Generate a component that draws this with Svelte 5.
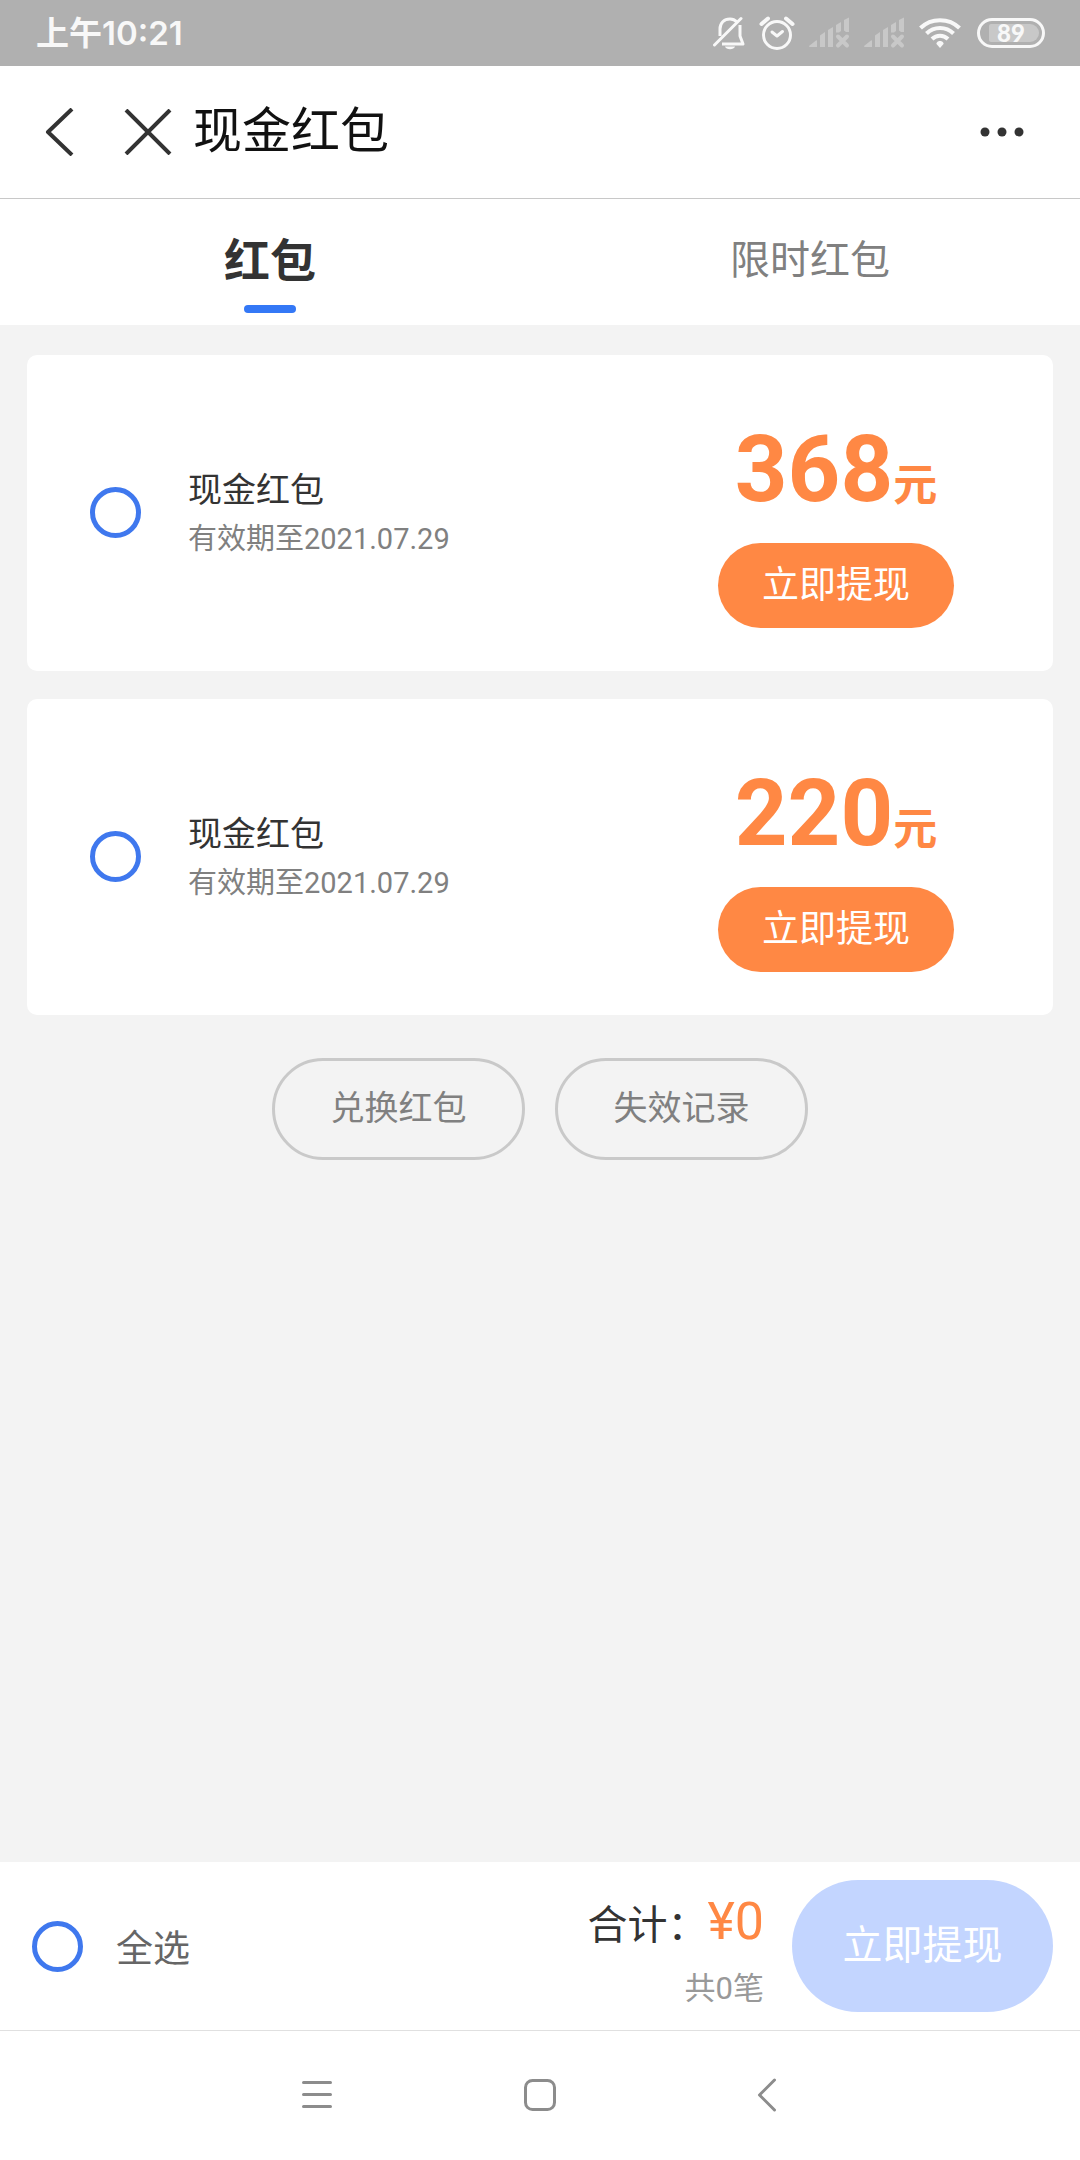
<script>
  let activeTab = 'normal';
  let checked = [];

  const tabs = [
    { id: 'normal', label: '红包' },
    { id: 'limited', label: '限时红包' }
  ];

  const packets = [
    { id: 1, name: '现金红包', expires: '2021.07.29', amount: 368 },
    { id: 2, name: '现金红包', expires: '2021.07.29', amount: 220 }
  ];

  $: selected = packets.filter((p) => checked.includes(p.id));
  $: total = selected.reduce((sum, p) => sum + p.amount, 0);
  $: allChecked = selected.length === packets.length;

  function toggleAll() {
    checked = allChecked ? [] : packets.map((p) => p.id);
  }
</script>

<div class="screen">
  <div class="status-bar">
    <span class="clock">上午10:21</span>
    <div class="status-icons">
      <!-- muted bell -->
      <svg width="32" height="34" viewBox="0 0 32 34" fill="none" stroke="#f8f8f8" stroke-width="3">
        <path d="M7 20V13C7 7 11 3 17 3C20 3 22 4 24 6M27 9V20L30 28H9" stroke-linejoin="round" />
        <path d="M1.500 29L28 2.500" stroke-linecap="round" />
        <path d="M12 30.500H22C21 34 13 34 12 30.500Z" fill="#f8f8f8" stroke="none" />
      </svg>
      <!-- alarm -->
      <svg width="36" height="34" viewBox="0 0 36 34" fill="none" stroke="#f8f8f8" stroke-linecap="round">
        <circle cx="18" cy="19" r="13.5" stroke-width="3" />
        <path d="M2.500 8L9 2.500M33.500 8L27 2.500" stroke-width="4" />
        <path d="M13 16L18 20L23.500 15.500" stroke-width="3" stroke-linejoin="round" />
      </svg>
      {#each [1, 2] as sim (sim)}
        <svg width="41" height="34" viewBox="0 0 41 34" fill="#c8c8c8">
          <path d="M0 30L7 24.500Q8 24 8 25V31H1Q0 31 0 30Z" />
          <path d="M11 19.500L16 16V31H11Z" />
          <path d="M19 14L24 11V31H19Z" />
          <path d="M27 9L32 6V15L30 16.500H27Z" />
          <path d="M35 4L40 1.500V16H37L35 14.500Z" />
          <path d="M29 20.500L38 29.500M38 20.500L29 29.500" stroke="#c8c8c8" stroke-width="4" stroke-linecap="round" />
        </svg>
      {/each}
      <!-- wifi -->
      <svg class="wifi" width="42" height="34" viewBox="0 0 42 34" fill="none" stroke="#f8f8f8" stroke-width="4">
        <path d="M1.500 12C12 1.500 30 1.500 40.500 12" />
        <path d="M7.500 17.500C15 10 27 10 34.500 17.500" />
        <path d="M13 23C17.500 18.500 24.500 18.500 29 23" />
        <path d="M21 25C23 25 25 26.500 24.500 28L21 32L17.500 28C17 26.500 19 25 21 25Z" fill="#f8f8f8" stroke="none" />
      </svg>
      <span class="battery"><span class="level">89</span></span>
    </div>
  </div>

  <header class="title-bar">
    <button class="icon-btn back" aria-label="返回">
      <svg width="30" height="48" viewBox="0 0 30 48" fill="none" stroke="#333" stroke-width="4">
        <path d="M28 1L4 24L28 47" stroke-linejoin="round" />
      </svg>
    </button>
    <button class="icon-btn close" aria-label="关闭">
      <svg width="48" height="46" viewBox="0 0 48 46" fill="none" stroke="#333" stroke-width="4">
        <path d="M2 1L46 45M46 1L2 45" />
      </svg>
    </button>
    <h1>现金红包</h1>
    <button class="icon-btn more" aria-label="更多">
      <svg width="46" height="12" viewBox="0 0 46 12" fill="#333">
        <circle cx="6" cy="6" r="4.500" />
        <circle cx="23" cy="6" r="4.500" />
        <circle cx="40" cy="6" r="4.500" />
      </svg>
    </button>
  </header>

  <div class="tabs" role="tablist">
    {#each tabs as tab (tab.id)}
      <button
        class="tab"
        class:active={activeTab === tab.id}
        role="tab"
        aria-selected={activeTab === tab.id}
        on:click={() => (activeTab = tab.id)}
      >{tab.label}</button>
    {/each}
  </div>

  <main>
    {#each packets as packet (packet.id)}
      <section class="card">
        <input
          id="packet-{packet.id}"
          class="check"
          type="checkbox"
          value={packet.id}
          bind:group={checked}
        />
        <label class="info" for="packet-{packet.id}">
          <span class="name">{packet.name}</span>
          <span class="expires">有效期至{packet.expires}</span>
        </label>
        <div class="payout">
          <div class="amount">{packet.amount}<span class="unit">元</span></div>
          <button class="withdraw">立即提现</button>
        </div>
      </section>
    {/each}

    <div class="links">
      <button class="outline">兑换红包</button>
      <button class="outline">失效记录</button>
    </div>
  </main>

  <footer class="summary">
    <input id="check-all" class="check" type="checkbox" checked={allChecked} on:change={toggleAll} />
    <label class="all" for="check-all">全选</label>
    <div class="totals">
      <div class="sum">合计：<span class="money">¥{total}</span></div>
      <div class="count">共{selected.length}笔</div>
    </div>
    <button class="withdraw-all" disabled={selected.length === 0}>立即提现</button>
  </footer>

  <nav class="system-nav">
    <button class="icon-btn" aria-label="菜单">
      <svg width="34" height="34" viewBox="0 0 34 34" fill="none" stroke="#8c8c8c" stroke-width="3" stroke-linecap="round">
        <path d="M4.500 4.500H31.500M4.500 16.500H31.500M4.500 28.500H31.500" />
      </svg>
    </button>
    <button class="icon-btn" aria-label="主屏幕">
      <svg width="34" height="34" viewBox="0 0 34 34" fill="none" stroke="#8c8c8c" stroke-width="3">
        <rect x="2.500" y="2.500" width="29" height="29" rx="7" />
      </svg>
    </button>
    <button class="icon-btn" aria-label="返回上一页">
      <svg width="34" height="34" viewBox="0 0 34 34" fill="none" stroke="#8c8c8c" stroke-width="3" stroke-linecap="round" stroke-linejoin="round">
        <path d="M27.500 2L12.500 17L27.500 32" />
      </svg>
    </button>
  </nav>
</div>

<style>
  :global(body) {
    margin: 0;
    background: #f3f3f3;
  }

  .screen {
    display: flex;
    flex-direction: column;
    min-height: 100vh;
    font-family: Roboto, "Noto Sans CJK SC", sans-serif;
    color: #333;
  }

  button {
    display: block;
    margin: 0;
    padding: 0;
    border: 0;
    background: none;
    font: inherit;
    color: inherit;
    cursor: pointer;
  }

  svg {
    display: block;
  }

  .status-bar {
    display: flex;
    align-items: center;
    justify-content: space-between;
    height: 66px;
    padding: 0 35px 0 36px;
    background: #b0b0b0;
    color: #f8f8f8;
  }

  .clock {
    font-family: Inter, "Noto Sans CJK SC", sans-serif;
    font-size: 33px;
    font-weight: 600;
    line-height: 40px;
  }

  .status-icons {
    display: flex;
    align-items: center;
    gap: 14px;
  }

  .wifi {
    margin-right: 2px;
  }

  .battery {
    display: flex;
    box-sizing: border-box;
    width: 68px;
    height: 30px;
    padding: 3px 3px 3px 9px;
    border: 3px solid #f8f8f8;
    border-radius: 15px;
  }

  .level {
    flex: 1;
    padding-right: 6px;
    border-radius: 2px 9px 9px 2px;
    background: #c8c8c8;
    font-family: Lato, sans-serif;
    font-size: 24px;
    font-weight: 900;
    line-height: 18px;
    text-align: center;
  }

  .title-bar {
    display: flex;
    align-items: center;
    height: 132px;
    padding: 0 55px 0 44px;
    border-bottom: 1px solid #c8c8c8;
    background: #fff;
  }

  .close {
    margin-left: 50px;
  }

  h1 {
    flex: 1;
    margin: 0 0 0 21px;
    font-size: 49px;
    font-weight: 400;
    line-height: 60px;
    color: #111;
  }

  .tabs {
    display: flex;
    background: #fff;
  }

  .tab {
    display: flex;
    flex: 1;
    flex-direction: column;
    align-items: center;
    height: 126px;
    padding-top: 32px;
    font-size: 40px;
    line-height: 60px;
    color: #808080;
  }

  .tab.active {
    font-size: 46px;
    font-weight: 700;
    color: #333;
  }

  .tab.active::after {
    content: "";
    width: 52px;
    height: 8px;
    margin-top: 14px;
    border-radius: 4px;
    background: #3478f6;
  }

  main {
    flex: 1;
    padding: 30px 27px;
  }

  .card {
    display: flex;
    align-items: center;
    height: 316px;
    margin-bottom: 28px;
    padding: 0 99px 2px 63px;
    box-sizing: border-box;
    border-radius: 10px;
    background: #fff;
  }

  .check {
    flex: none;
    width: 51px;
    height: 51px;
    margin: 0;
    border: 5px solid #3f78ee;
    border-radius: 50%;
    background: #fff;
    appearance: none;
    cursor: pointer;
  }

  .check:checked {
    background: #3f78ee;
    box-shadow: inset 0 0 0 6px #fff;
  }

  .info {
    display: flex;
    flex: 1;
    flex-direction: column;
    margin-left: 47px;
    padding-top: 3px;
  }

  .name {
    font-size: 34px;
    line-height: 50px;
  }

  .expires {
    font-size: 29px;
    line-height: 48px;
    color: #808080;
  }

  .payout {
    width: 236px;
    padding-top: 18px;
    text-align: center;
  }

  .amount {
    font-size: 92px;
    font-weight: 700;
    line-height: 110px;
    color: #ff8844;
  }

  .unit {
    font-size: 44px;
  }

  .withdraw {
    width: 100%;
    height: 85px;
    margin-top: 2px;
    padding-bottom: 6px;
    border-radius: 43px;
    background: #ff8844;
    font-size: 37px;
    color: #fff;
  }

  .links {
    display: flex;
    justify-content: center;
    gap: 30px;
    margin-top: 43px;
  }

  .outline {
    width: 253px;
    height: 102px;
    padding-bottom: 8px;
    border: 3px solid #c9c9c9;
    border-radius: 51px;
    font-size: 34px;
    color: #808080;
  }

  .summary {
    display: flex;
    align-items: center;
    height: 168px;
    padding: 0 27px 0 32px;
    border-bottom: 1px solid #e0e0e0;
    background: #fff;
  }

  .all {
    margin-left: 33px;
    font-size: 37px;
    color: #666;
  }

  .totals {
    flex: 1;
    margin-right: 28px;
    padding-top: 15px;
    text-align: right;
  }

  .sum {
    font-size: 40px;
    line-height: 66px;
  }

  .money {
    font-size: 52px;
    color: #ff8844;
  }

  .count {
    font-size: 31px;
    line-height: 60px;
    color: #999;
  }

  .withdraw-all {
    width: 261px;
    height: 132px;
    padding-bottom: 8px;
    border-radius: 66px;
    background: #3f78ee;
    font-size: 40px;
    color: #fff;
  }

  .withdraw-all:disabled {
    background: #c3d5ff;
    cursor: default;
  }

  .system-nav {
    display: flex;
    align-items: center;
    justify-content: center;
    gap: 190px;
    height: 127px;
    padding-bottom: 2px;
    background: #fff;
  }
</style>
